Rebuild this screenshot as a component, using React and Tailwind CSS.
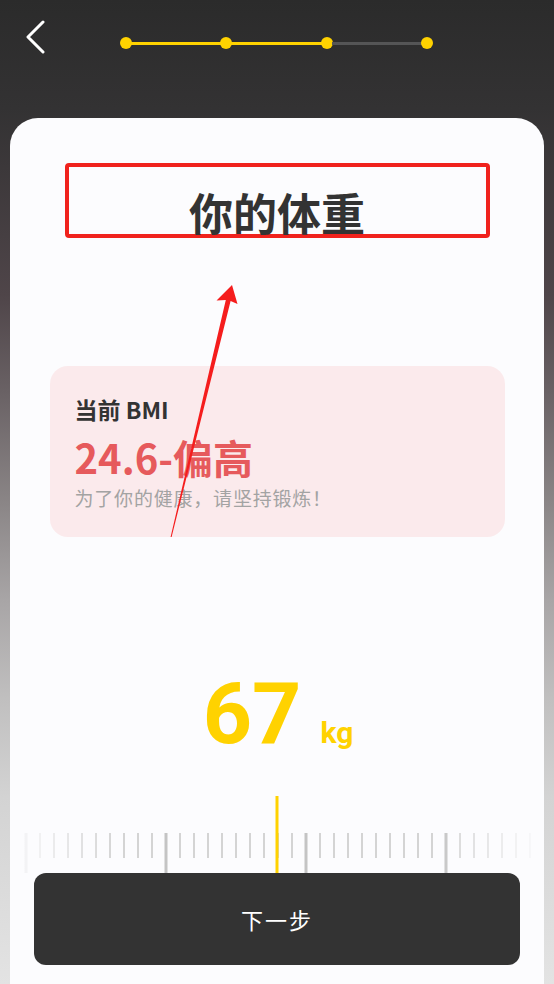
import React from 'react';

const CJK = '"Noto Sans CJK SC", "Noto Sans", sans-serif';

const Ruler = () => {
  const ticks = [];
  for (let i = 0; i <= 36; i++) {
    const cx = 16 + i * 14;
    const major = i % 10 === 0;
    ticks.push(
      <rect
        key={i}
        x={major ? cx - 1.5 : cx - 1}
        y={37}
        width={major ? 3 : 2}
        height={major ? 40 : 25}
        fill={major ? '#c4c4c4' : '#d4d4d4'}
      />
    );
  }
  return (
    <svg width="534" height="77" viewBox="0 0 534 77" className="block">
      <defs>
        <linearGradient id="fade" x1="0" x2="1" y1="0" y2="0">
          <stop offset="0" stopColor="#fff" stopOpacity="0" />
          <stop offset="0.2" stopColor="#fff" stopOpacity="1" />
          <stop offset="0.8" stopColor="#fff" stopOpacity="1" />
          <stop offset="1" stopColor="#fff" stopOpacity="0" />
        </linearGradient>
        <mask id="fadeMask">
          <rect x="0" y="0" width="534" height="77" fill="url(#fade)" />
        </mask>
      </defs>
      <g mask="url(#fadeMask)">{ticks}</g>
      <rect x="265.5" y="0" width="3" height="77" fill="#ffd200" />
    </svg>
  );
};

export default function App() {
  return (
    <div
      className="relative flex min-h-[984px] w-full flex-col bg-[linear-gradient(180deg,#2b2b2b_0%,#333233_11%,#4f4549_30%,#6a6265_40%,#8a8586_51%,#a8a5a6_61%,#c0bfbf_71%,#d3d3d3_81%,#e3e3e3_100%)]"
      style={{ fontFamily: CJK }}
    >
      {/* Header */}
      <div className="flex h-[118px] items-start pl-[24px]">
        <svg width="22" height="34" viewBox="0 0 22 34" className="mt-[20px]">
          <path d="M19 2 L4 17 L19 32" fill="none" stroke="#fff" strokeWidth="3" strokeLinecap="round" strokeLinejoin="round" />
        </svg>
        <div className="ml-[74px] mt-[37px] flex w-[313px] items-center">
          <span className="h-[12px] w-[12px] rounded-full bg-[#ffd200]" />
          <span className="-mx-[1px] h-[3px] flex-1 bg-[#ffd200]" />
          <span className="h-[12px] w-[12px] rounded-full bg-[#ffd200]" />
          <span className="-mx-[1px] h-[3px] flex-1 bg-[#ffd200]" />
          <span className="h-[12px] w-[12px] rounded-full bg-[#ffd200]" />
          <span className="-mx-[1px] h-[3px] flex-1 bg-[#555556]" />
          <span className="h-[12px] w-[12px] rounded-full bg-[#ffd200]" />
        </div>
      </div>

      {/* Card */}
      <div className="mx-[10px] flex flex-1 flex-col items-center rounded-t-[28px] bg-[#fcfcfe]">
        {/* Title (annotated) */}
        <div className="mt-[45px] flex h-[75px] w-[425px] items-end justify-center rounded-[4px] border-[4px] border-[#f0221d]">
          <h1 className="text-[44px] font-bold leading-none text-[#333333]">你的体重</h1>
        </div>

        {/* BMI */}
        <div className="mt-[128px] flex h-[171px] w-[455px] flex-col rounded-[18px] bg-[#fbeaec] pl-[25px] pt-[32px]">
          <div className="text-[23px] font-bold leading-none text-[#333333]">当前 BMI</div>
          <div className="mt-[16px] text-[40px] font-bold leading-none text-[#e65a5c]">24.6-偏高</div>
          <div className="mt-[11px] text-[19px] tracking-[0.8px] leading-none text-[#a3a3a3]">为了你的健康，请坚持锻炼！</div>
        </div>

        {/* Weight value */}
        <div
          className="mt-[134px] flex h-[86px] items-baseline pl-[2px]"
          style={{ fontFamily: 'Roboto, "Liberation Sans", sans-serif' }}
        >
          <span className="text-[86px] font-bold leading-none text-[#ffd200]">67</span>
          <span className="ml-[19px] text-[30px] font-bold leading-none text-[#ffd200]">kg</span>
        </div>

        <div className="mt-[39px]">
          <Ruler />
        </div>

        <button className="mb-[19px] flex h-[92px] w-[486px] items-center justify-center rounded-[12px] bg-[#333333] text-[22px] tracking-[2px] text-white">
          下一步
        </button>
      </div>

      {/* Red annotation arrow */}
      <svg className="pointer-events-none absolute left-0 top-0" width="554" height="984" viewBox="0 0 554 984">
        <polygon
          points="232,285 237.5,304 230.6,301 171.6,537 170.6,537 225.8,300 216.5,300.5"
          fill="#f51d1d"
        />
      </svg>
    </div>
  );
}
